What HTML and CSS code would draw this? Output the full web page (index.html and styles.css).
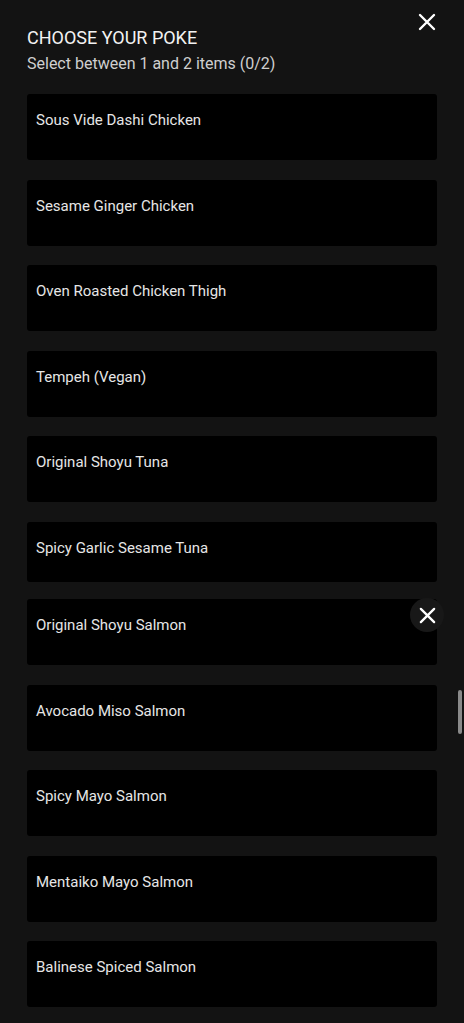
FILE: index.html
```html
<!DOCTYPE html>
<html lang="en">
<head>
  <meta charset="UTF-8" />
  <meta name="viewport" content="width=device-width, initial-scale=1.0" />
  <title>Choose your poke</title>
  <link rel="stylesheet" href="styles.css">
</head>
<body>
  <div class="sheet">
    <button class="close-btn" aria-label="Close">
      <svg width="20" height="20" viewBox="0 0 20 20"><path d="M3 3 L17 17 M17 3 L3 17" stroke="#fff" stroke-width="2.4" stroke-linecap="round"/></svg>
    </button>
    <h1 class="title">CHOOSE YOUR POKE</h1>
    <p class="subtitle">Select between 1 and 2 items (0/2)</p>
    <div class="options">
      <div class="option">Sous Vide Dashi Chicken</div>
      <div class="option">Sesame Ginger Chicken</div>
      <div class="option">Oven Roasted Chicken Thigh</div>
      <div class="option">Tempeh (Vegan)</div>
      <div class="option">Original Shoyu Tuna</div>
      <div class="option short">Spicy Garlic Sesame Tuna</div>
      <div class="option">Original Shoyu Salmon</div>
      <div class="option">Avocado Miso Salmon</div>
      <div class="option">Spicy Mayo Salmon</div>
      <div class="option">Mentaiko Mayo Salmon</div>
      <div class="option">Balinese Spiced Salmon</div>
    </div>
    <button class="float-close" aria-label="Close">
      <svg width="20" height="20" viewBox="0 0 20 20"><path d="M3 3 L17 17 M17 3 L3 17" stroke="#fff" stroke-width="2.4" stroke-linecap="round"/></svg>
    </button>
    <div class="scrollbar"></div>
  </div>
</body>
</html>
```

FILE: styles.css
```css
body {
  margin: 0;
  padding: 0;
  background: #131313;
  font-family: Roboto, 'Noto Sans', sans-serif;
  color: #fff;
}
.sheet {
  position: relative;
  padding: 27px 27px 20px 27px;
  min-height: 1023px;
  box-sizing: border-box;
  overflow: hidden;
}
.title {
  margin: 0;
  font-size: 18px;
  line-height: 22px;
  font-weight: 400;
  color: #f2f2f2;
}
.subtitle {
  margin: 5px 0 0 0;
  font-size: 16px;
  line-height: 20px;
  color: #cfcfcf;
}
.options {
  margin-top: 20px;
  display: flex;
  flex-direction: column;
  gap: 19.5px;
}
.option {
  height: 66px;
  box-sizing: border-box;
  padding: 16px 9px 0 9px;
  background: #000;
  border-radius: 3px;
  font-size: 15px;
  line-height: 20px;
  color: #e6e6e6;
}
.option.short {
  height: 60px;
  margin-bottom: -2px;
}
.close-btn {
  position: absolute;
  top: 12px;
  right: 27px;
  width: 20px;
  height: 20px;
  padding: 0;
  border: none;
  background: none;
  cursor: pointer;
}
.float-close {
  position: absolute;
  top: 598px;
  left: 410px;
  width: 34px;
  height: 34px;
  border-radius: 50%;
  border: none;
  padding: 0;
  background: #181818;
  display: flex;
  align-items: center;
  justify-content: center;
  cursor: pointer;
}
.float-close svg {
  width: 19px;
  height: 19px;
}
.scrollbar {
  position: absolute;
  top: 690px;
  left: 458px;
  width: 4px;
  height: 44px;
  border-radius: 2px;
  background: #8a8a8a;
}
```
